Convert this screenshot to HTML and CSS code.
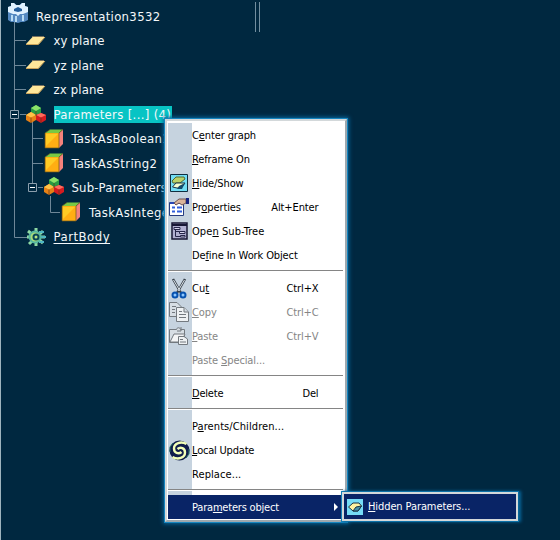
FILE: index.html
```
<!DOCTYPE html>
<html lang="en">
<head>
<meta charset="utf-8">
<title>Representation3532</title>
<link rel="stylesheet" href="styles.css">
</head>
<body>
<svg class="defs" width="0" height="0">
  <defs>
    <symbol id="plane" viewBox="0 0 20 10"><path d="M6.5 1H19L12.500 8H0Z" fill="#ffe79a"/><path d="M0 8.500H12.500L19 1" fill="none" stroke="#c9a25a"/><path d="M6 .5H18" stroke="#77715f"/></symbol>
    <symbol id="cube" viewBox="0 0 20 20"><path d="M1 4L6 .5H19L15 4Z" fill="#79c943"/><path d="M15 4L19 .5V15L15 19Z" fill="#f5827c"/><path d="M1 4H15V19H1Z" fill="#ffae13"/><path d="M2 5H14L2 17Z" fill="#ffcb24"/><path d="M1 4V19H15V4M15 4L19 .5M1 4L6 .5" fill="none" stroke="#665320" stroke-width=".7"/></symbol>
    <symbol id="cubes" viewBox="0 0 20 18"><path d="M5 3L10 0L15 3V8L10 11L5 8Z" fill="#299b43"/><path d="M5 3L10 0L15 3L10 6Z" fill="#8ce36a"/><path d="M0 10L5 7L10 10V15L5 18L0 15Z" fill="#e78115"/><path d="M0 10L5 7L10 10L5 12.500Z" fill="#ffc247"/><path d="M10 10L15 8L20 10V15L15 18L10 15Z" fill="#d51b20"/><path d="M10 10L15 8L20 10L15 12.500Z" fill="#ff6b5c"/><path d="M5 12.500V18M15 12.500V18M10 6V11" stroke="#633817" stroke-width=".7"/></symbol>
  </defs>
</svg>
<main class="screen">
  <svg class="lines" width="175" height="250" viewBox="0 0 175 250">
    <path d="M14.500 22V237.500H27M15 40.500H26M15 65.500H26M15 89.500H26M20 114.500H26M32.500 122V183M33 138.500H43M33 163.500H43M38 187.500H43M50.500 196V212.500H60" fill="none" stroke="#6e8798"/>
    <path d="M10.500 110.500H18.500V118.500H10.500ZM28.500 183.500H36.500V191.500H28.500Z" fill="#002840" stroke="#8c9fad"/>
    <path d="M12 114.500H17M30 187.500H35" stroke="#fff"/>
  </svg>
  <div class="grip"></div>
  <div class="tree">
    <div class="node root"><svg class="ti" width="20" height="20" viewBox="0 0 20 20"><path d="M0 4L3 3V0H6L10 3L14 0H17V3L20 4V17L16 19H13L10 20L6 19H3L0 17Z" fill="#5489c1"/><path d="M0 4L3 3V0H6L8 2H12L14 0H17V3L20 4V9L15 11H12L10 13L8 11H5L0 9Z" fill="#e0f2ff"/><path d="M10 4L14 6V8L10 9L6 8V6Z" fill="#225d9b"/><path d="M4 12V18M8 13V19M15 12V18" stroke="#b8dcf4" stroke-width="2"/></svg><span class="label wide">Representation3532</span></div>
    <div class="node l1"><svg class="ti" width="20" height="10"><use href="#plane"/></svg><span class="label">xy plane</span></div>
    <div class="node l1"><svg class="ti" width="20" height="10"><use href="#plane"/></svg><span class="label">yz plane</span></div>
    <div class="node l1"><svg class="ti" width="20" height="10"><use href="#plane"/></svg><span class="label">zx plane</span></div>
    <div class="node l1"><svg class="ti" width="20" height="18"><use href="#cubes"/></svg><span class="label wide sel">Parameters [...] (4)</span></div>
    <div class="node l2"><svg class="ti" width="20" height="20"><use href="#cube"/></svg><span class="label wide">TaskAsBoolean1</span></div>
    <div class="node l2"><svg class="ti" width="20" height="20"><use href="#cube"/></svg><span class="label wide">TaskAsString2</span></div>
    <div class="node l2"><svg class="ti up" width="20" height="18"><use href="#cubes"/></svg><span class="label">Sub-Parameters</span></div>
    <div class="node l3"><svg class="ti" width="20" height="20"><use href="#cube"/></svg><span class="label wide">TaskAsInteger3</span></div>
    <div class="node l1"><svg class="ti" width="20" height="20" viewBox="0 0 20 20"><path d="M10 1V19M2 4L17 16M1 10H19M3 17L17 4" stroke="#8ed9a4" stroke-width="3"/><path d="M13 5H18M15 10H20M13 15H18" stroke="#50b7c4" stroke-width="2"/><circle cx="9" cy="10" r="5.500" fill="#a9dc79" stroke="#55b6a0" stroke-width="2"/><circle cx="10" cy="10" r="3.500" fill="#064558"/><circle cx="10" cy="10" r="1.500" fill="#b9e384"/></svg><span class="label body">PartBody</span></div>
  </div>

  <div class="menu">
    <div class="item"><i></i><span>C<u>e</u>nter graph</span></div>
    <div class="item"><i></i><span><u>R</u>eframe On</span></div>
    <div class="item"><i><svg width="18" height="18" viewBox="0 0 18 18"><path d="M.5.500H17.500V17.500H.5Z" fill="#72def5" stroke="#102e40"/><path d="M2 7L6 3H14L15 5L10 9H3Z" fill="#bbd268" stroke="#526a34"/><path d="M2.500 13L6 9L15 9L11 14H7Z" fill="#f7ffd1" stroke="#183548"/><path d="M7 15L9 12L15 9L12 15Z" fill="#164b6c"/></svg></i><span><u>H</u>ide/Show</span></div>
    <div class="item"><i><svg width="21" height="18" viewBox="0 0 21 18"><path d="M.5 4.500H14.500V17.500H.5Z" fill="#fff" stroke="#263b80"/><path d="M1 5H14" stroke="#2946b5" stroke-width="2"/><path d="M3 9.500H6M8 9.500H13M3 13.500H6M8 13.500H13" stroke="#315edb" stroke-width="2"/><path d="M5 5L10 1L17 1V5L13 7L10 5L7 7Z" fill="#dab49a" stroke="#6b5254"/><path d="M17 0H20V6H17Z" fill="#182480"/></svg></i><span>Pr<u>o</u>perties</span><kbd>Alt+Enter</kbd></div>
    <div class="item"><i><svg width="17" height="18" viewBox="0 0 17 18"><path d="M1 1H16V17H1Z" fill="#b1b0d1" stroke="#171735" stroke-width="1.500"/><path d="M1 3H16" stroke="#171735" stroke-width="2"/><path d="M4.500 6V14.500H10M4.500 9.500H9" fill="none" stroke="#26264a"/><path d="M3 5.500H9V7.500H3ZM8.500 9.500H14V11.500H8.500ZM9.500 13.500H14V15H9.500Z" fill="#d9d8ef" stroke="#26264a"/></svg></i><span class="roomy">Ope<u>n</u> Sub-Tree</span></div>
    <div class="item"><i></i><span>De<u>f</u>ine In Work Object</span></div>
    <div class="sep"></div>
    <div class="item"><i><svg width="16" height="21" viewBox="0 0 16 21"><path d="M2 1L10 15M14 1L6 15" stroke="#39424c" stroke-width="2.500"/><path d="M2.500 2L9 13M13.500 2L7 13" stroke="#dce4e9"/><circle cx="4" cy="17" r="2.500" fill="#8dc7ff" stroke="#0752af" stroke-width="2"/><circle cx="12" cy="17" r="2.500" fill="#8dc7ff" stroke="#0752af" stroke-width="2"/></svg></i><span class="roomy">Cu<u>t</u></span><kbd>Ctrl+X</kbd></div>
    <div class="item off"><i><svg width="20" height="20" viewBox="0 0 20 20"><g fill="#d7dee4" stroke="#73797f"><path d="M.5.500H8L12.500 5V14.500H.5Z"/><path d="M7.500 5.500H15L19.500 10V19.500H7.500Z" fill="#eef1f3"/><path d="M15 5.500V10H19M3 4.500H7M3 7.500H6M3 10.500H6M10 9.500H13M10 12.500H17M10 15.500H17"/></g></svg></i><span><u>C</u>opy</span><kbd>Ctrl+C</kbd></div>
    <div class="item off"><i><svg width="20" height="20" viewBox="0 0 20 20"><g fill="#d7dee4" stroke="#73797f"><path d="M.5 3.500H15.500V16.500H.5Z"/><path d="M1 16L5 8H16L12 16Z" fill="#f4f5f6"/><path d="M9.500 10.500H15L18.500 13V18.500H9.500Z" fill="#eef1f3"/><path d="M11 13.500H14M11 16H17M7 4C8 1 11 1 12 4M12 1V5H8"/></g></svg></i><span><u>P</u>aste</span><kbd>Ctrl+V</kbd></div>
    <div class="item off"><i></i><span>Paste <u>S</u>pecial...</span></div>
    <div class="sep"></div>
    <div class="item"><i></i><span class="tight"><u>D</u>elete</span><kbd>Del</kbd></div>
    <div class="sep"></div>
    <div class="item"><i></i><span class="roomy">P<u>a</u>rents/Children...</span></div>
    <div class="item"><i><svg width="21" height="21" viewBox="0 0 21 21"><circle cx="10.500" cy="10.500" r="10" fill="#101d4b"/><path d="M17.500 4C12 1 5 3 5 8.500C5 13 9.500 14.500 12.500 12M3.500 17C9 20 16 18 16 12.500C16 8 11.500 6.500 8.500 9" fill="none" stroke="#f3ffb7" stroke-width="2.400"/><path d="M1 12V7L4 3M20 9V14L17 18" fill="none" stroke="#287567"/></svg></i><span class="tight"><u>L</u>ocal Update</span></div>
    <div class="item"><i></i><span class="roomy">Replace...</span></div>
    <div class="sep"></div>
    <div class="item active"><i></i><span class="tight">Para<u>m</u>eters object</span><svg class="arrow" width="4" height="8" viewBox="0 0 4 8"><path d="M0 0L4 4L0 8Z" fill="#fff"/></svg></div>
  </div>
  <div class="submenu"><svg width="16" height="16" viewBox="0 0 16 16"><path d="M0 0H16V16H0Z" fill="#75dcf7"/><path d="M1.500 8L6 4H12L14.500 7L11 12H6Z" fill="#fff2a2" stroke="#183345"/><path d="M6 12L9 8L14.500 7L11 12Z" fill="#4992a9" stroke="#183345"/></svg><span><u>H</u>idden Parameters...</span></div>
</main>
</body>
</html>
```
FILE: styles.css
```
* { box-sizing: border-box; }
body { margin: 0; }
.defs { position: absolute; }
.screen {
  position: relative;
  width: 560px;
  height: 540px;
  overflow: hidden;
  padding-top: 4px;
  background: #002840;
  border-left: 1px solid #9eb4be;
  font-family: "DejaVu Sans Condensed", "DejaVu Sans", sans-serif;
}
.lines { position: absolute; left: -1px; top: 0; }
.grip { position: absolute; left: 254px; top: 2px; width: 5px; height: 30px; border: solid #728e9f; border-width: 0 1px; }
.tree { position: relative; width: 560px; }
.node { display: flex; align-items: center; height: 24.5px; color: #f4f8fa; font-size: 13px; white-space: nowrap; }
.root { padding-left: 7px; }
.root .ti { position: relative; top: -3px; }
.l1 { padding-left: 24.5px; }
.l2 { padding-left: 42.5px; }
.l3 { padding-left: 60px; }
.ti { flex: none; margin-right: 8px; }
.up { position: relative; top: -2px; }
.label { line-height: 17px; letter-spacing: .15px; }
.wide { letter-spacing: .33px; }
.sel { background: #08c4c4; width: 118px; }
.body { letter-spacing: .5px; text-decoration: underline; text-underline-offset: 2px; }
.menu {
  position: absolute;
  left: 164px;
  top: 119px;
  width: 182px;
  height: 403px;
  padding: 2px 1px 0;
  background: #fff;
  border: 2px solid #d3d8da;
  border-right-color: #9da8af;
  border-bottom-color: #9da8af;
  box-shadow: 0 0 0 1px #1685bf, 0 0 4px 2px #07659a;
}
.item { display: flex; align-items: center; height: 24px; width: 175px; color: #000; font-size: 11px; letter-spacing: -.12px; white-space: nowrap; }
.item i { flex: none; display: flex; align-items: center; justify-content: center; width: 24px; height: 24px; padding-right: 2px; background: #c6d3df; }
.item kbd { font: inherit; margin-left: auto; margin-right: 24.5px; }
.tight { letter-spacing: -.2px; }
.roomy { letter-spacing: .08px; }
u { text-decoration: underline; text-underline-offset: 1px; text-decoration-thickness: 1px; }
.off { color: #858585; }
.sep { height: 9px; width: 175px; background: linear-gradient(#858585, #858585) 0 3px / 175px 1px no-repeat, linear-gradient(#c6d3df, #c6d3df) 0 0 / 24px 3px no-repeat, linear-gradient(#c6d3df, #c6d3df) 0 5px / 24px 4px no-repeat; }
.active, .active i { background: #092466; color: #fff; }
.arrow { margin-left: auto; margin-right: 5px; }
.submenu {
  position: absolute;
  left: 341px;
  top: 492px;
  width: 176px;
  height: 29px;
  display: flex;
  align-items: center;
  gap: 5px;
  padding-left: 3px;
  background: #092466;
  border: 2px solid #d3d8da;
  color: #fff;
  font-size: 11px;
  letter-spacing: -.1px;
  white-space: nowrap;
  box-shadow: 2px 0 3px 1px #07659a, 0 0 0 1px #1685bf;
}
```
